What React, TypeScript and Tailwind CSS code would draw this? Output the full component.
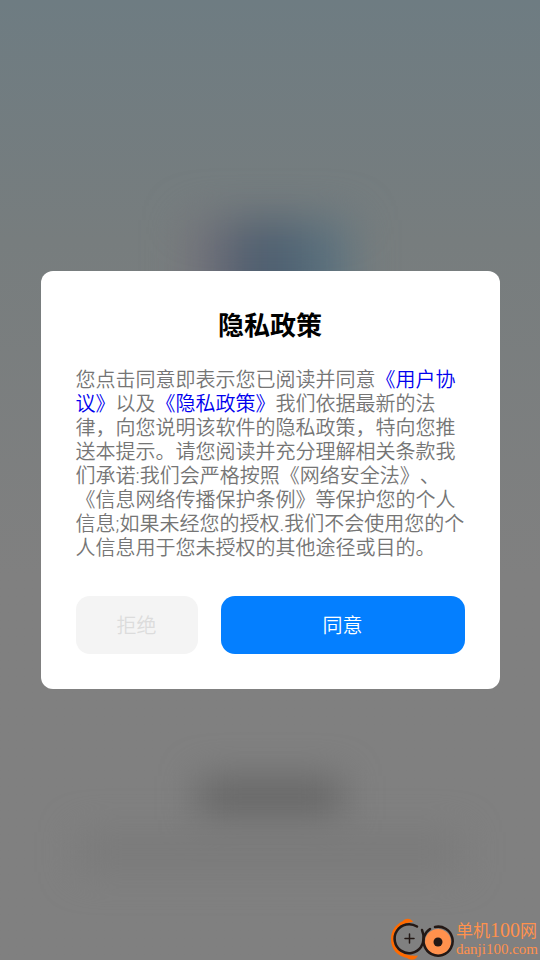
import type { ReactNode } from "react";

function PolicyLink({ href, children }: { href: string; children: ReactNode }) {
  return (
    <a href={href} className="text-[#0000ee]">
      {children}
    </a>
  );
}

function SiteLogo() {
  return (
    <svg viewBox="0 0 64 43" className="h-[43px] w-16" fill="none" aria-hidden="true">
      <path
        d="M22 5C20 1.500 15 .5 12 4C4 8 0 14 0 22C0 33 7 39 16 41C20 44 25 43 27 38.500C14 40 2.500 33 2.500 22C2.500 12 11 5.500 22 5Z"
        fill="#ff6a00"
      />
      <path
        d="M26 9.500A14.500 14.500 0 1 0 30 30C33 25 33 18 31 13"
        stroke="#231815"
        strokeWidth="2.500"
        strokeLinecap="round"
      />
      <path
        d="M18.500 17V26M14 21.500H23"
        stroke="#231815"
        strokeWidth="1.500"
        strokeLinecap="round"
      />
      <circle cx="47" cy="25" r="13" fill="#ff914d" />
      <path
        d="M39 12C33 16 31 23 33.500 29A14.500 14.500 0 1 0 44 10"
        stroke="#231815"
        strokeWidth="2.500"
        strokeLinecap="round"
      />
      <circle cx="47" cy="25" r="4.500" fill="#231815" />
    </svg>
  );
}

// Blurred splash screen behind the dialog
function SplashBackdrop() {
  return (
    <div className="absolute inset-0 overflow-hidden bg-linear-to-b from-[#6e7c82] via-[#777d7e] via-25% to-[#808080] to-60%">
      <div className="absolute left-1/2 top-[220px] h-28 w-40 -translate-x-1/2 bg-linear-to-r from-[#75727a] from-5% via-[#4b5c6e] via-45% to-[#5f7782] blur-[22px]" />
      <div className="absolute left-1/2 top-[776px] h-11 w-36 -translate-x-1/2 bg-[#686868] blur-[18px]" />
      <div className="absolute left-1/2 top-[832px] h-10 w-96 -translate-x-1/2 bg-[#7a7a7a] blur-[18px]" />
    </div>
  );
}

export default function App() {
  return (
    <main className="relative flex min-h-screen items-center justify-center font-['Noto_Sans_CJK_SC',sans-serif]">
      <SplashBackdrop />

      <section
        role="dialog"
        aria-modal="true"
        aria-labelledby="policy-title"
        className="relative w-[85%] rounded-xl bg-white p-[35px]"
      >
        <h1
          id="policy-title"
          className="text-center text-[26px] leading-9 font-bold text-black"
        >
          隐私政策
        </h1>
        <p className="mt-[26px] -mr-1 font-[Roboto,'Noto_Sans_CJK_SC',sans-serif] text-xl leading-6 font-[350] text-[#757575] [text-spacing-trim:space-all]">
          您点击同意即表示您已阅读并同意
          <PolicyLink href="#agreement">《用户协议》</PolicyLink>
          以及
          <PolicyLink href="#privacy">《隐私政策》</PolicyLink>
          我们依据最新的法律，向您说明该软件的隐私政策，特向您推送本提示。请您阅读并充分理解相关条款我们承诺:我们会严格按照《网络安全法》、《信息网络传播保护条例》等保护您的个人信息;如果未经您的授权.我们不会使用您的个人信息用于您未授权的其他途径或目的。
        </p>
        <div className="mt-9 flex gap-[23px]">
          <button
            type="button"
            className="h-[58px] flex-1 rounded-[14px] bg-[#f4f4f4] text-xl font-[350] text-[#dcdcdc]"
          >
            拒绝
          </button>
          <button
            type="button"
            className="h-[58px] flex-2 rounded-[14px] bg-[#047fff] text-xl font-[350] text-white"
          >
            同意
          </button>
        </div>
      </section>

      <div className="absolute right-0.5 bottom-0 flex items-end gap-px text-[#ff914d]">
        <SiteLogo />
        <div className="flex flex-col pb-0.5 whitespace-nowrap">
          <span className="text-[17px] leading-5">
            单机
            <span className="font-['Liberation_Serif',serif] text-xl leading-5">100</span>
            网
          </span>
          <span className="font-['Liberation_Serif',serif] text-[15px] leading-[18px]">
            danji100.com
          </span>
        </div>
      </div>
    </main>
  );
}
